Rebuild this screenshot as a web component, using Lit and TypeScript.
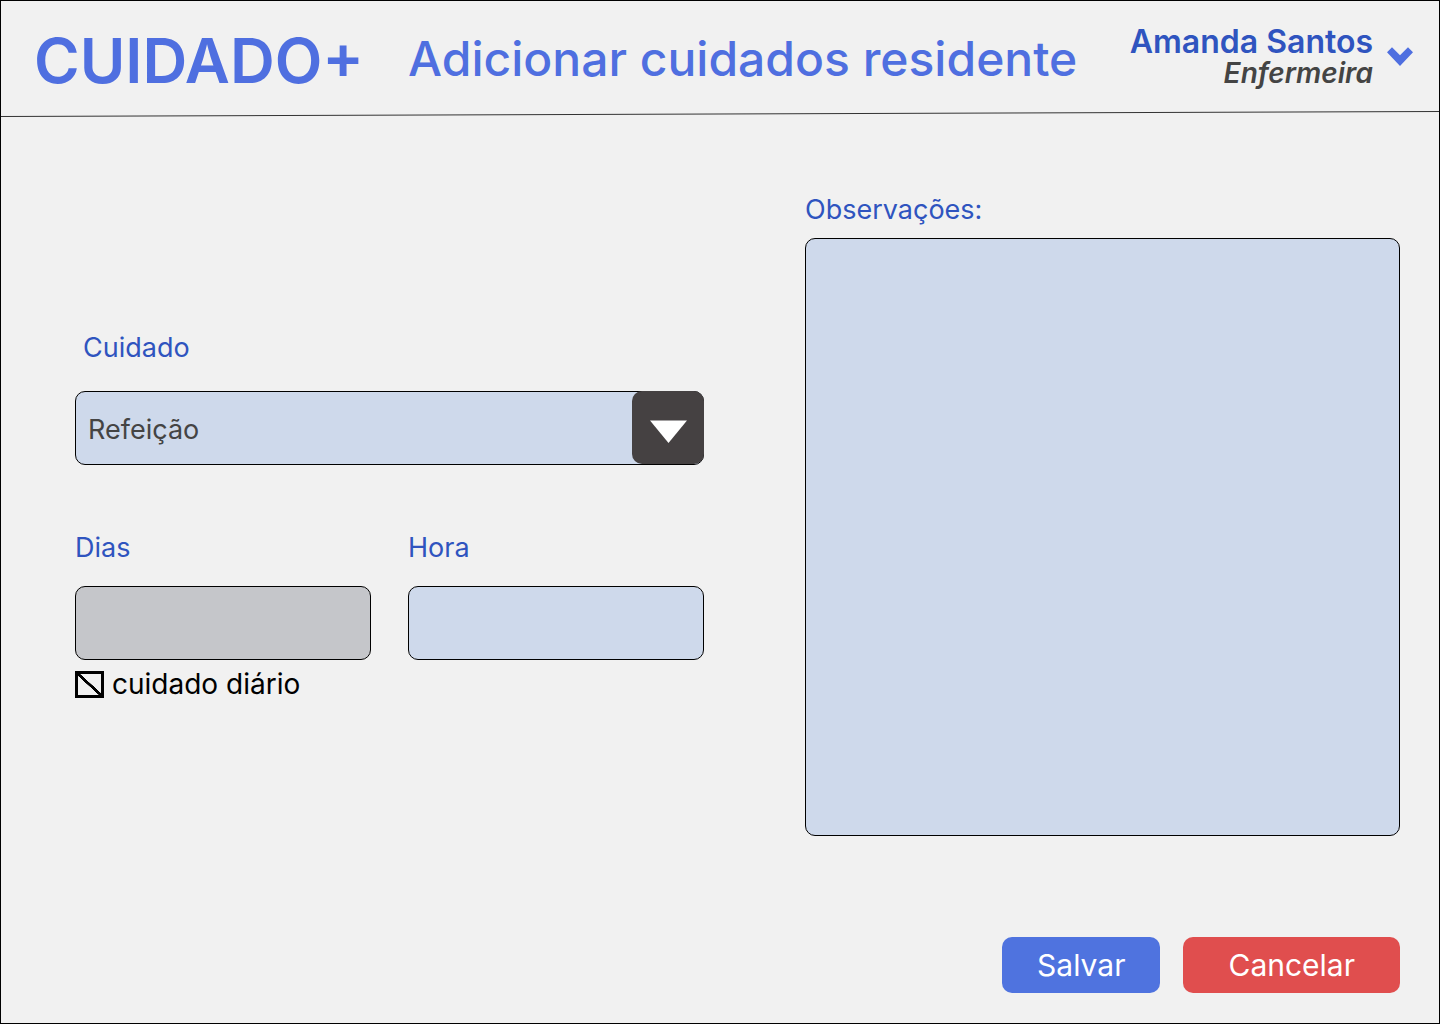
import { LitElement, html, css } from "lit";
import { customElement, state } from "lit/decorators.js";

@customElement("app-root")
export class AppRoot extends LitElement {
  @state() private daily = true;

  static styles = css`
    :host {
      display: block;
      font-family: Inter, "Open Sans", sans-serif;
      font-size: 27px;
      line-height: 36px;
      color: #000;
    }
    * {
      box-sizing: border-box;
    }
    .page {
      min-height: 100vh;
      display: flex;
      flex-direction: column;
      background: #f1f1f1;
      border: 1px solid #000;
    }
    .header {
      display: flex;
      align-items: center;
      padding: 10px 26px 0 33px;
      height: 110px;
    }
    .logo {
      font-size: 62px;
      line-height: 80px;
      font-weight: 600;
      color: #4f6fe0;
    }
    .title {
      margin: 0 0 0 44px;
      padding-bottom: 4px;
      font-size: 48px;
      line-height: 60px;
      font-weight: 500;
      color: #4f6fe0;
      white-space: nowrap;
    }
    .user {
      margin-left: auto;
      display: flex;
      align-items: center;
      gap: 14px;
      padding: 0 0 8px;
      border: 0;
      background: none;
      font: inherit;
      text-align: right;
      white-space: nowrap;
      cursor: pointer;
    }
    .identity {
      display: flex;
      flex-direction: column;
    }
    .name {
      font-size: 32px;
      line-height: 32px;
      font-weight: 600;
      color: #2f54bf;
    }
    .role {
      font-size: 28px;
      line-height: 30px;
      font-weight: 600;
      font-style: italic;
      color: #444;
    }
    .chevron {
      width: 26px;
      height: 20px;
      flex: none;
    }
    .rule {
      display: block;
      width: 100%;
      height: 6px;
    }
    .form {
      flex: 1;
      display: flex;
      flex-direction: column;
      padding: 75px 39px 30px 74px;
    }
    .columns {
      flex: 1;
      display: grid;
      grid-template-columns: 629fr 595fr;
      gap: 101px;
    }
    .left {
      padding-top: 138px;
    }
    .field {
      display: flex;
      flex-direction: column;
      gap: 20px;
    }
    .care {
      gap: 25px;
      margin-bottom: 65px;
    }
    .label {
      color: #2f54bf;
    }
    .care .label {
      padding-left: 8px;
    }
    .pair {
      display: grid;
      grid-template-columns: 1fr 1fr;
      gap: 37px;
    }
    .box {
      display: block;
      width: 100%;
      min-width: 0;
      height: 74px;
      margin: 0;
      padding: 0 12px;
      border: 1px solid #000;
      border-radius: 10px;
      background: #ced9eb;
      font: inherit;
      color: #444;
      appearance: none;
    }
    .box:disabled {
      background: #c5c6ca;
    }
    .picker {
      display: grid;
    }
    .picker > * {
      grid-area: 1 / 1;
    }
    .picker .box {
      padding-top: 4px;
    }
    .arrow {
      justify-self: end;
      width: 72px;
      height: 73px;
      pointer-events: none;
    }
    .notes {
      gap: 10px;
    }
    .notes .box {
      flex: 1;
      padding: 12px;
      resize: none;
    }
    .check {
      display: flex;
      align-items: center;
      gap: 8px;
      margin-top: 6px;
      font-size: 28px;
    }
    .tick {
      appearance: none;
      width: 29px;
      height: 27px;
      margin: 0;
      border: 3px solid #000;
    }
    .tick:checked {
      background: linear-gradient(to top right, transparent 45%, #000 46%, #000 54%, transparent 55%);
    }
    .actions {
      display: flex;
      justify-content: flex-end;
      gap: 23px;
      margin-top: 101px;
    }
    .button {
      height: 56px;
      padding: 0 35px;
      border: 0;
      border-radius: 10px;
      font: inherit;
      font-size: 30px;
      color: #fff;
      cursor: pointer;
    }
    .save {
      background: #4f73df;
    }
    .cancel {
      padding: 0 45px;
      background: #e04e4e;
    }
  `;

  render() {
    return html`
      <div class="page">
        <header class="header">
          <div class="logo">CUIDADO+</div>
          <h1 class="title">Adicionar cuidados residente</h1>
          <button class="user" type="button">
            <span class="identity">
              <span class="name">Amanda Santos</span>
              <span class="role">Enfermeira</span>
            </span>
            <svg class="chevron" viewBox="0 0 26 20" aria-hidden="true">
              <path d="M0 5.2 5 0.2 13 8.2 21 0.2 26 5.2 13 19z" fill="#4f6fe0" />
            </svg>
          </button>
        </header>
        <svg class="rule" viewBox="0 0 1438 6" preserveAspectRatio="none" aria-hidden="true">
          <path d="M0 5.5 1438 0.5" stroke="#333" vector-effect="non-scaling-stroke" />
        </svg>
        <form class="form" @submit=${(e: Event) => e.preventDefault()}>
          <div class="columns">
            <div class="left">
              <div class="field care">
                <label class="label" for="care">Cuidado</label>
                <div class="picker">
                  <select class="box" id="care">
                    <option>Refeição</option>
                  </select>
                  <svg class="arrow" viewBox="0 0 72 73" aria-hidden="true">
                    <rect width="72" height="73" rx="10" fill="#454142" />
                    <path d="M18 29.5h37L36.5 52z" fill="#fff" />
                  </svg>
                </div>
              </div>
              <div class="pair">
                <div class="field">
                  <label class="label" for="days">Dias</label>
                  <input class="box" id="days" type="text" ?disabled=${this.daily} />
                </div>
                <div class="field">
                  <label class="label" for="hour">Hora</label>
                  <input class="box" id="hour" type="text" />
                </div>
              </div>
              <label class="check">
                <input
                  class="tick"
                  type="checkbox"
                  .checked=${this.daily}
                  @change=${(e: Event) => (this.daily = (e.target as HTMLInputElement).checked)}
                />
                cuidado diário
              </label>
            </div>
            <div class="field notes">
              <label class="label" for="notes">Observações:</label>
              <textarea class="box" id="notes"></textarea>
            </div>
          </div>
          <div class="actions">
            <button class="button save" type="submit">Salvar</button>
            <button class="button cancel" type="button">Cancelar</button>
          </div>
        </form>
      </div>
    `;
  }
}
